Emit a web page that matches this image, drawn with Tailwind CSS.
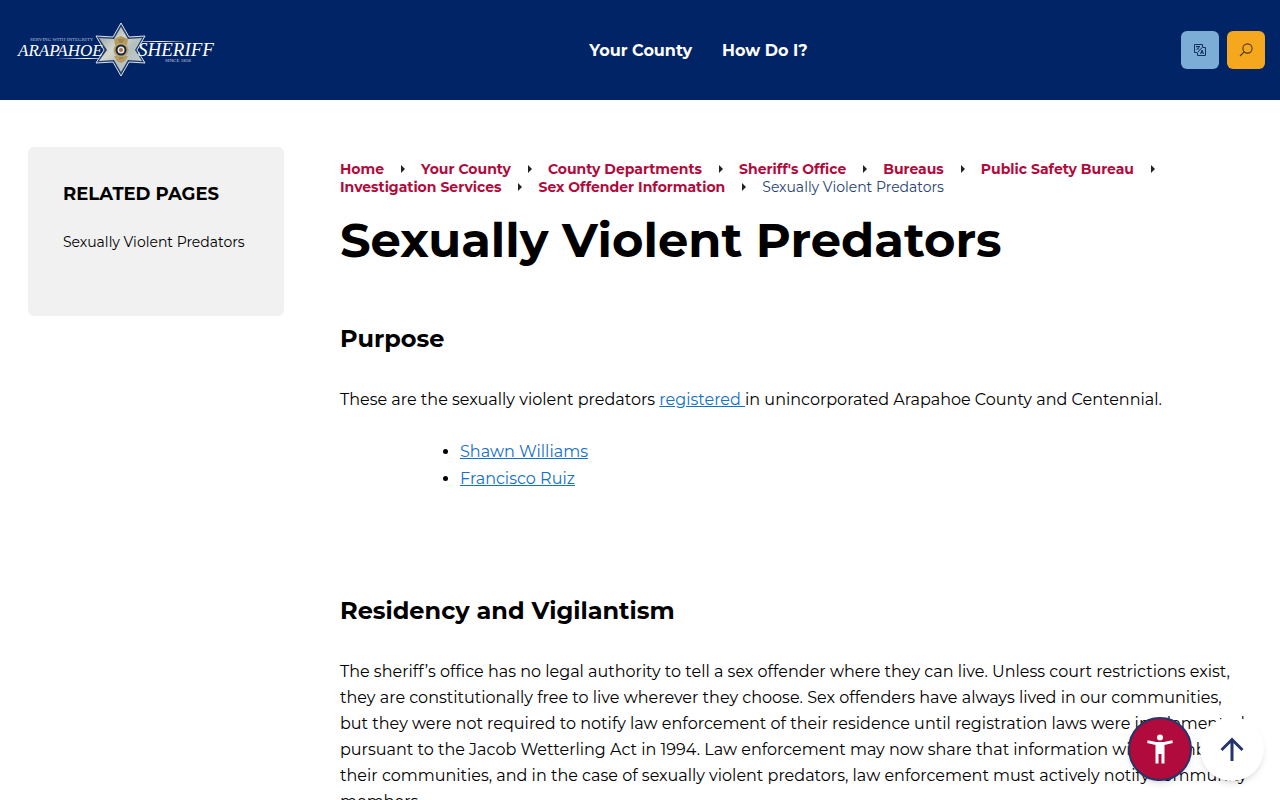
<!DOCTYPE html>
<html lang="en">
<head>
    <meta charset="UTF-8">
    <meta name="viewport" content="width=device-width, initial-scale=1.0">
    <title>Sexually Violent Predators | Arapahoe County Sheriff</title>
    <script src="https://cdn.jsdelivr.net/npm/@tailwindcss/browser@4"></script>
</head>
<body class="bg-white text-black font-['Montserrat','Inter',sans-serif] overflow-x-hidden">
    <header class="bg-[#002465] h-25 pl-4 pr-[15px] flex items-center justify-between">
        <a href="#" aria-label="Arapahoe Sheriff home">
            <svg class="w-50 h-15" viewBox="0 0 200 60" fill="none">
                <defs>
                    <linearGradient id="star" x1="0" y1="0" x2="1" y2="1">
                        <stop offset="0" stop-color="#8495a0"/>
                        <stop offset=".4" stop-color="#d5d8cc"/>
                        <stop offset=".6" stop-color="#b5bfbe"/>
                        <stop offset="1" stop-color="#c9d2d0"/>
                    </linearGradient>
                    <linearGradient id="line" x1="0" x2="1">
                        <stop offset="0" stop-color="#fff" stop-opacity="0"/>
                        <stop offset=".5" stop-color="#fff"/>
                        <stop offset="1" stop-color="#fff" stop-opacity="0"/>
                    </linearGradient>
                </defs>
                <rect x="40" y="38" width="60" height="1" fill="url(#line)"/>
                <rect x="112" y="21" width="60" height="1" fill="url(#line)"/>
                <!-- badge -->
                <path d="M105 3 113 17 129 16 121 30 129 43 113 42 105 56 97 42 80 43 88 30 80 16 97 17Z" fill="#243d6c" stroke="#dce4e8" stroke-width="1"/>
                <path d="M105 7 112 19 126 18 119 30 126 41 112 40 105 52 98 40 83 41 91 30 83 18 98 19Z" fill="url(#star)"/>
                <path d="M98 19 105 16 112 19 111 25 99 25ZM98 36h14l-3 5-4 2-4-2Z" fill="#b59b5b"/>
                <circle cx="105" cy="30" r="7.5" fill="#b9a36d"/>
                <circle cx="105" cy="30" r="5.5" fill="#17233f"/>
                <circle cx="105" cy="30" r="3.5" fill="#e9e6dc"/>
                <circle cx="105" cy="30" r="2" fill="#a96f4c"/>
                <path d="M102 20h6M103 22h4M103 38h4" stroke="#6d6048" stroke-width=".7"/>
                <g fill="#fff" font-family="Liberation Serif, serif">
                    <text x="14" y="21" font-size="5" fill="#b6c5de">SERVING WITH INTEGRITY</text>
                    <text x="2" y="36" font-size="17" font-style="italic">ARAPAHOE</text>
                    <text x="122" y="36" font-size="19" font-style="italic">SHERIFF</text>
                    <text x="149" y="42" font-size="5" fill="#c6d2e5">SINCE 1858</text>
                </g>
            </svg>
        </a>
        <nav class="flex gap-[30px] pt-0.5 text-white text-base font-bold">
            <a href="#">Your County</a>
            <a href="#">How Do I?</a>
        </nav>
        <div class="flex gap-2">
            <button type="button" aria-label="Translate" class="size-[38px] rounded-md bg-[#7badd6] flex items-center justify-center">
                <svg class="size-3.5" viewBox="0 0 14 14" fill="none" stroke="#13315f">
                    <path d="M4 9.500H1.500v-8h8V4M9.500 4.500h3v8h-8v-3M5 9l4-4.500"/>
                    <path d="M3 3.500h4M5 3v.5M6 3.500C6 5 5 6 3.500 6.500M4 4.500 6 6.500M7.500 11 9 7l1.500 4M8 9.700h2"/>
                </svg>
            </button>
            <button type="button" aria-label="Search" class="size-[38px] rounded-md bg-[#f5a81e] flex items-center justify-center">
                <svg class="size-3.5" viewBox="0 0 14 14" fill="none" stroke="#4b3612" stroke-width="1.1">
                    <circle cx="8.500" cy="5.500" r="4.600"/>
                    <path d="M5.200 8.800 1 13"/>
                </svg>
            </button>
        </div>
    </header>

    <div class="flex items-start gap-14 px-7 pt-[47px]">
        <aside class="w-64 shrink-0 rounded-md bg-[#f1f1f1] px-[35px] pt-[35px] pb-16">
            <h2 class="text-lg leading-6 font-bold">RELATED PAGES</h2>
            <a href="#" class="mt-[26px] block text-sm">Sexually Violent Predators</a>
        </aside>

        <main class="min-w-0 flex-1 pt-[13px]">
            <nav aria-label="Breadcrumb" class="max-w-[860px]">
                <ol class="flex flex-wrap text-sm leading-[18px] font-bold text-[#b10a3c]">
                    <li class="flex items-center"><a href="#">Home</a><svg class="ml-[17px] mr-4 w-1 h-2" viewBox="0 0 4 8"><path d="M0 0 4 4 0 8Z" fill="#222"/></svg></li>
                    <li class="flex items-center"><a href="#">Your County</a><svg class="ml-[17px] mr-4 w-1 h-2" viewBox="0 0 4 8"><path d="M0 0 4 4 0 8Z" fill="#222"/></svg></li>
                    <li class="flex items-center"><a href="#">County Departments</a><svg class="ml-[17px] mr-4 w-1 h-2" viewBox="0 0 4 8"><path d="M0 0 4 4 0 8Z" fill="#222"/></svg></li>
                    <li class="flex items-center"><a href="#">Sheriff's Office</a><svg class="ml-[17px] mr-4 w-1 h-2" viewBox="0 0 4 8"><path d="M0 0 4 4 0 8Z" fill="#222"/></svg></li>
                    <li class="flex items-center"><a href="#">Bureaus</a><svg class="ml-[17px] mr-4 w-1 h-2" viewBox="0 0 4 8"><path d="M0 0 4 4 0 8Z" fill="#222"/></svg></li>
                    <li class="flex items-center"><a href="#">Public Safety Bureau</a><svg class="ml-[17px] mr-4 w-1 h-2" viewBox="0 0 4 8"><path d="M0 0 4 4 0 8Z" fill="#222"/></svg></li>
                    <li class="flex items-center"><a href="#">Investigation Services</a><svg class="ml-[17px] mr-4 w-1 h-2" viewBox="0 0 4 8"><path d="M0 0 4 4 0 8Z" fill="#222"/></svg></li>
                    <li class="flex items-center"><a href="#">Sex Offender Information</a><svg class="ml-[17px] mr-4 w-1 h-2" viewBox="0 0 4 8"><path d="M0 0 4 4 0 8Z" fill="#222"/></svg></li>
                    <li class="font-normal text-[#28426f]" aria-current="page">Sexually Violent Predators</li>
                </ol>
            </nav>
            <h1 class="mt-4 text-5xl leading-[56px] font-bold">Sexually Violent Predators</h1>

            <h2 class="mt-[55px] text-2xl font-bold">Purpose</h2>
            <p class="mt-8 text-base leading-[26px]">These are the sexually violent predators <a href="#" class="text-[#1470c8] underline">registered </a>in unincorporated Arapahoe County and Centennial.</p>
            <ul class="mt-[25px] pl-30 list-disc text-base leading-[27px]">
                <li><a href="#" class="text-[#1470c8] underline">Shawn Williams</a></li>
                <li><a href="#" class="text-[#1470c8] underline">Francisco Ruiz</a></li>
            </ul>

            <h2 class="mt-[103px] text-2xl font-bold">Residency and Vigilantism</h2>
            <p class="mt-8 text-base leading-[26px]">The sheriff’s office has no legal authority to tell a sex offender where they can live. Unless court restrictions exist, they are constitutionally free to live wherever they choose. Sex offenders have always lived in our communities, but they were not required to notify law enforcement of their residence until registration laws were implemented pursuant to the Jacob Wetterling Act in 1994. Law enforcement may now share that information with members of their communities, and in the case of sexually violent predators, law enforcement must actively notify community members.</p>
        </main>
    </div>

    <!-- floating buttons -->
    <div class="fixed right-4 bottom-[19px] flex gap-2">
        <button type="button" aria-label="Accessibility options" class="size-16 rounded-full border-2 border-[#24356a] bg-[#b10a3c] shadow-md flex items-center justify-center">
            <svg class="w-[26px] h-[30px]" viewBox="0 0 26 30" fill="#fff">
                <circle cx="13" cy="3.500" r="3"/>
                <path d="M.7 6.200 9 8h8l8.300-1.800.6 2.700L17.500 11v18.500h-3V20h-3v9.500h-3V11L.1 8.900Z"/>
            </svg>
        </button>
        <button type="button" aria-label="Back to top" class="size-16 rounded-full bg-white shadow-md flex items-center justify-center">
            <svg class="size-6" viewBox="0 0 24 24" fill="none" stroke="#24356a" stroke-width="3">
                <path d="M12 24V2M1.500 13 12 2.500 22.500 13"/>
            </svg>
        </button>
    </div>
</body>
</html>
